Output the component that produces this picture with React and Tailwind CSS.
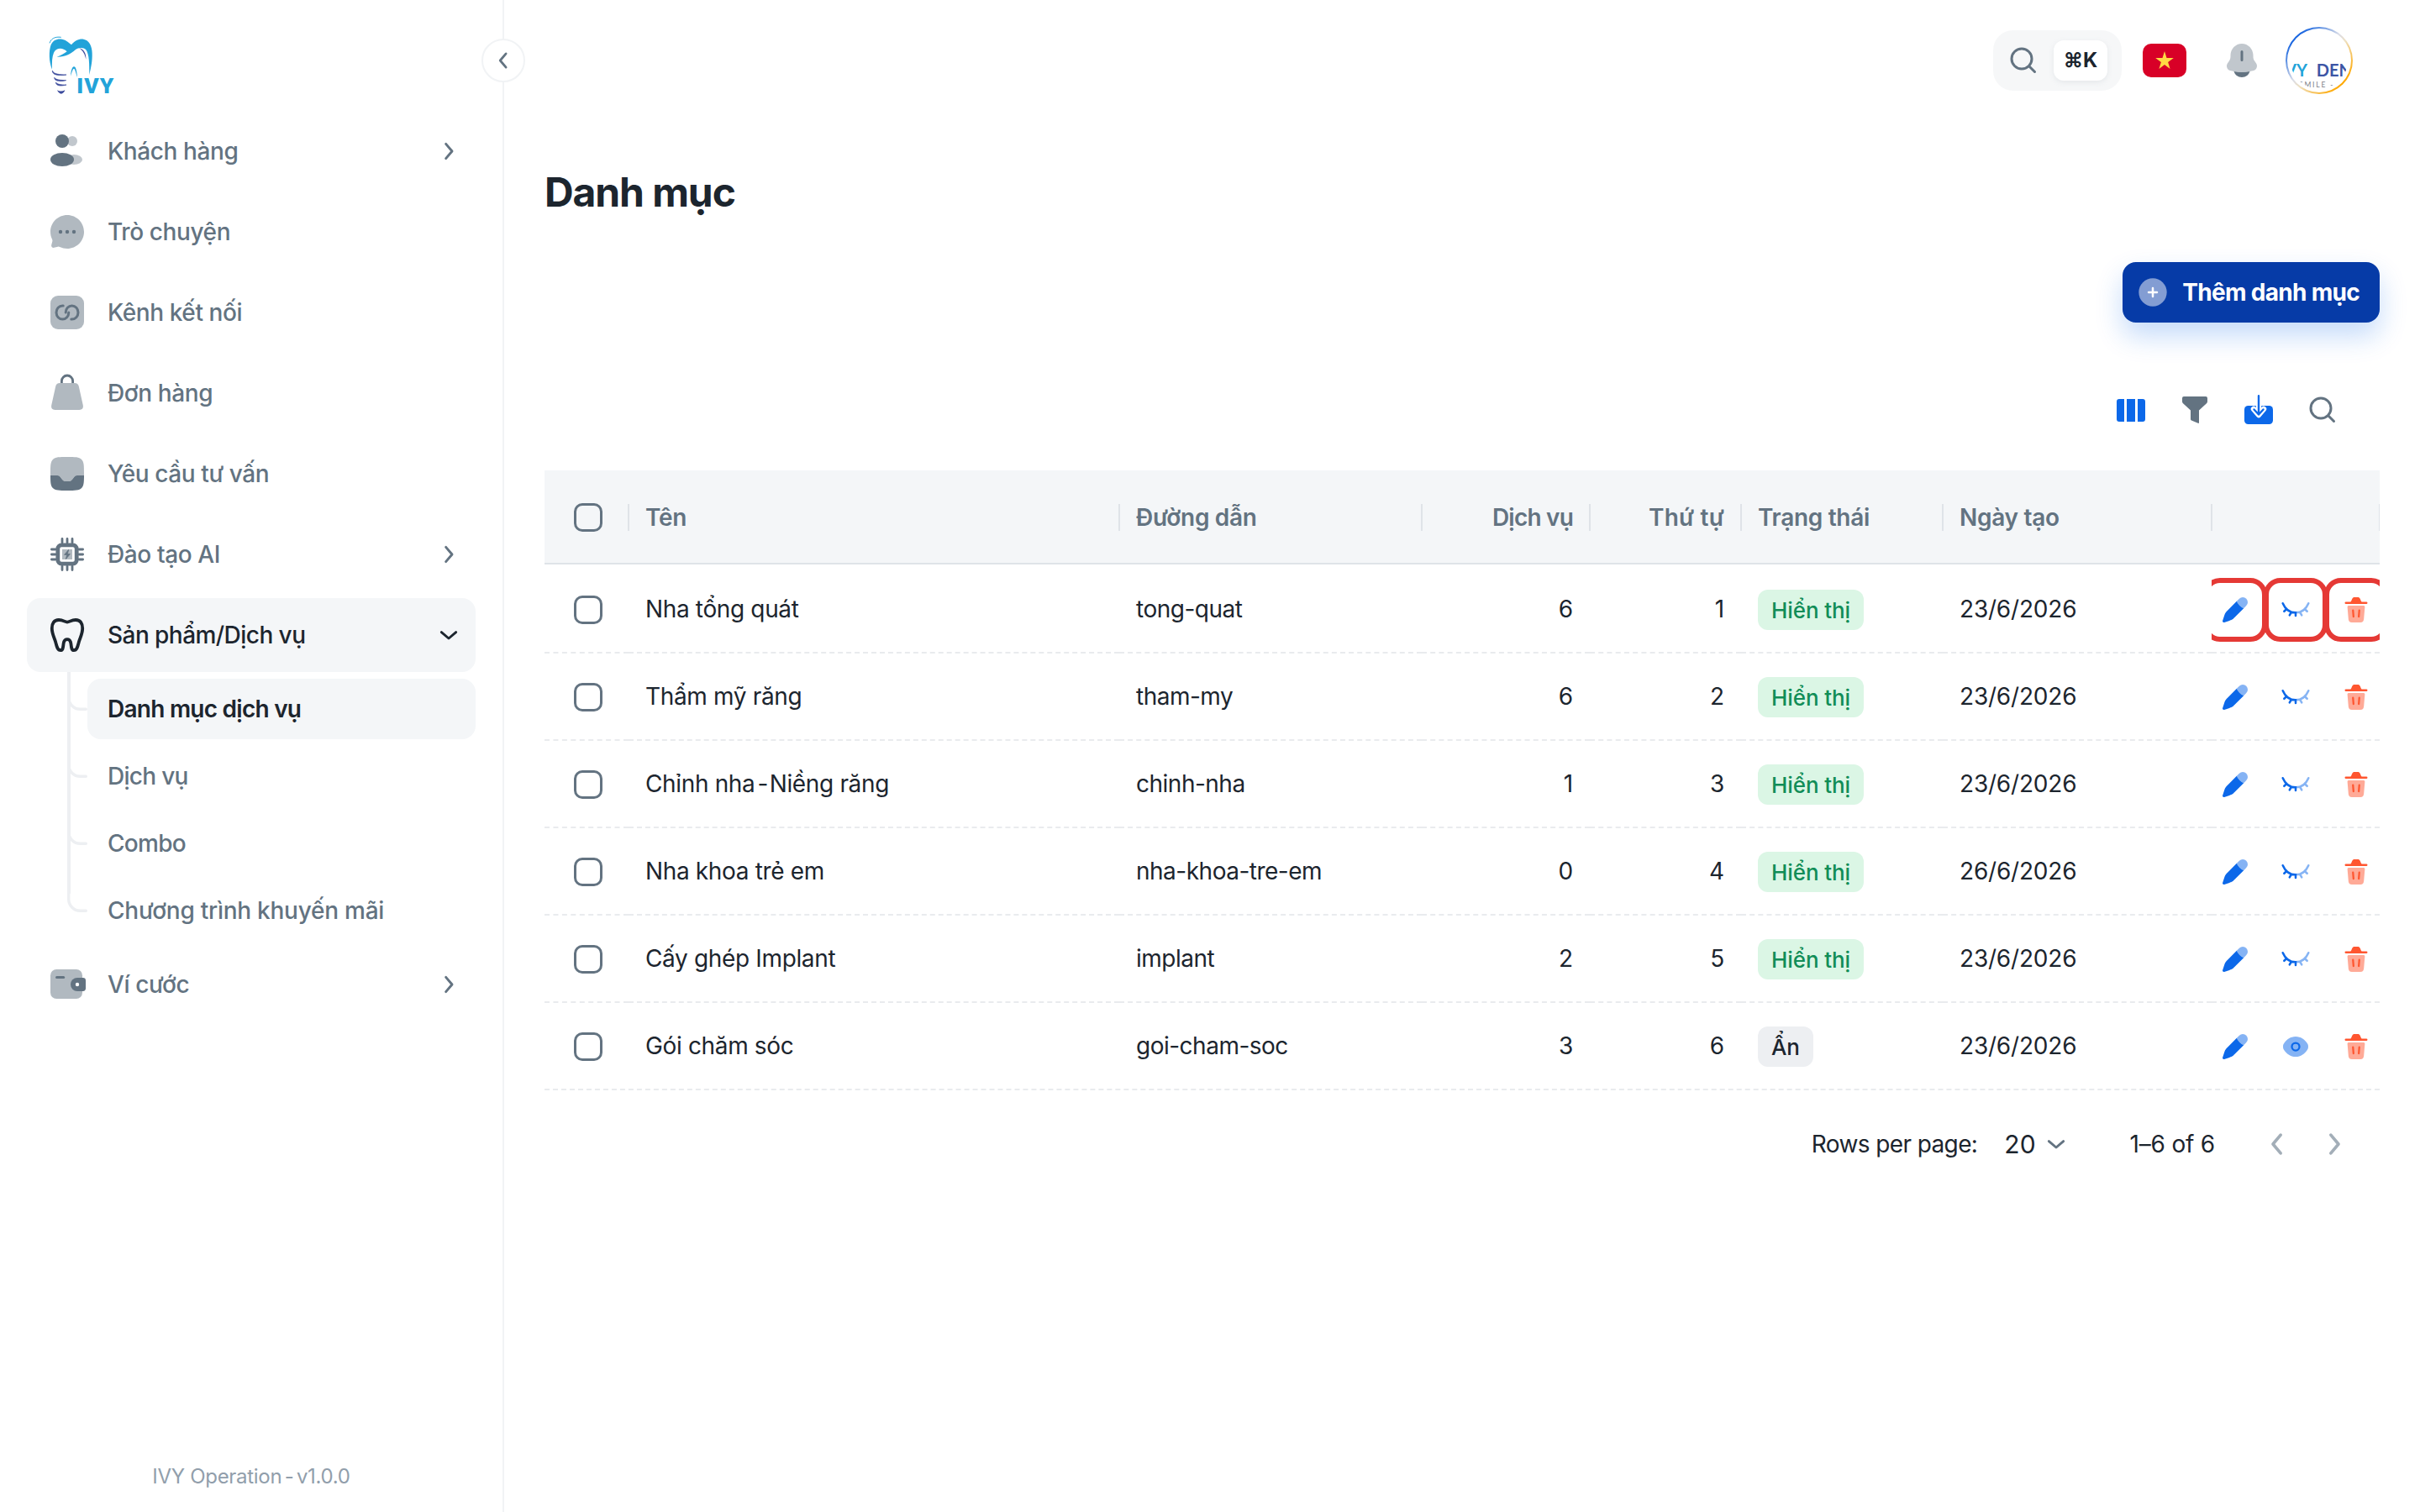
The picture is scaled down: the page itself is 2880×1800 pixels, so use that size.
import clsx from "clsx";

const NAV_ITEMS = [
  { label: "Khách hàng", icon: UsersIcon, arrow: true },
  { label: "Trò chuyện", icon: ChatIcon },
  { label: "Kênh kết nối", icon: LinkIcon },
  { label: "Đơn hàng", icon: BagIcon },
  { label: "Yêu cầu tư vấn", icon: InboxIcon },
  { label: "Đào tạo AI", icon: CpuIcon, arrow: true },
  {
    label: "Sản phẩm/Dịch vụ",
    icon: ToothIcon,
    arrow: true,
    active: true,
    children: ["Danh mục dịch vụ", "Dịch vụ", "Combo", "Chương trình khuyến mãi"],
  },
  { label: "Ví cước", icon: WalletIcon, arrow: true },
];

const ROWS = [
  { name: "Nha tổng quát", slug: "tong-quat", services: 6, order: 1, visible: true, date: "23/6/2026", highlight: true },
  { name: "Thẩm mỹ răng", slug: "tham-my", services: 6, order: 2, visible: true, date: "23/6/2026" },
  { name: "Chỉnh nha - Niềng răng", slug: "chinh-nha", services: 1, order: 3, visible: true, date: "23/6/2026" },
  { name: "Nha khoa trẻ em", slug: "nha-khoa-tre-em", services: 0, order: 4, visible: true, date: "26/6/2026" },
  { name: "Cấy ghép Implant", slug: "implant", services: 2, order: 5, visible: true, date: "23/6/2026" },
  { name: "Gói chăm sóc", slug: "goi-cham-soc", services: 3, order: 6, visible: false, date: "23/6/2026" },
];

const GRID = "grid grid-cols-[100px_584px_360px_200px_180px_240px_320px_200px]";

function Icon({ children, className = "size-12" }) {
  return (
    <svg viewBox="0 0 24 24" fill="currentColor" className={clsx("shrink-0", className)}>
      {children}
    </svg>
  );
}

function UsersIcon() {
  return (
    <Icon>
      <circle cx="15" cy="6" r="3" opacity="0.4" />
      <ellipse cx="16" cy="17" rx="5" ry="3" opacity="0.4" />
      <circle cx="9" cy="6" r="4" />
      <ellipse cx="9" cy="17" rx="7" ry="4" />
    </Icon>
  );
}

function ChatIcon() {
  return (
    <Icon>
      <path
        opacity="0.5"
        d="M12 22c5.523 0 10-4.477 10-10S17.523 2 12 2S2 6.477 2 12c0 1.6.376 3.112 1.043 4.453c.178.356.237.763.134 1.148l-.595 2.226a1.3 1.3 0 0 0 1.591 1.592l2.226-.596a1.63 1.63 0 0 1 1.149.133A9.96 9.96 0 0 0 12 22"
      />
      <circle cx="8" cy="12" r="1.1" />
      <circle cx="12" cy="12" r="1.1" />
      <circle cx="16" cy="12" r="1.1" />
    </Icon>
  );
}

function LinkIcon() {
  return (
    <Icon>
      <rect x="2" y="2" width="20" height="20" rx="4.5" opacity="0.5" />
      <g fill="none" stroke="currentColor" strokeWidth="1.5" strokeLinecap="round">
        <path d="M9.6 8H9.2a3.7 4 0 1 0 3.7 4" />
        <path d="M14.4 16h.4a3.7 4 0 1 0-3.7-4" />
      </g>
    </Icon>
  );
}

function BagIcon() {
  return (
    <Icon>
      <path
        opacity="0.5"
        d="M7.6 6h8.8c1.4 0 2.2.6 2.5 2l2.5 11.3c.3 1.7-.5 2.7-2.2 2.7H4.8c-1.7 0-2.5-1-2.2-2.7L5.1 8c.3-1.4 1.1-2 2.5-2z"
      />
      <path d="M8.7 6V4.8a3.3 3.3 0 0 1 6.6 0V6" fill="none" stroke="currentColor" strokeWidth="1.4" />
    </Icon>
  );
}

function InboxIcon() {
  return (
    <Icon>
      <path
        opacity="0.5"
        d="M12 2C7.286 2 4.929 2 3.465 3.464C2 4.93 2 7.286 2 12v1h3.16c.905 0 1.358 0 1.756.183s.692.527 1.281 1.214l.606.706c.589.687.883 1.031 1.281 1.214s.85.183 1.756.183h.32c.905 0 1.358 0 1.756-.183s.692-.527 1.281-1.214l.606-.706c.589-.687.883-1.031 1.281-1.214S17.934 13 18.84 13H22v-1c0-4.714 0-7.071-1.465-8.536C19.072 2 16.714 2 12 2"
      />
      <path d="M2 13h3.16c.905 0 1.358 0 1.756.183s.692.527 1.281 1.214l.606.706c.589.687.883 1.031 1.281 1.214s.85.183 1.756.183h.32c.905 0 1.358 0 1.756-.183s.692-.527 1.281-1.214l.606-.706c.589-.687.883-1.031 1.281-1.214S17.934 13 18.84 13H22c-.01 4.1-.1 6.2-1.465 7.535C19.072 22 16.714 22 12 22s-7.071 0-8.535-1.465C2.1 19.2 2.01 17.1 2 13" />
    </Icon>
  );
}

function CpuIcon() {
  return (
    <Icon>
      <g fill="none" stroke="currentColor" strokeLinecap="round">
        <rect x="6.4" y="6.4" width="11.2" height="11.2" rx="2.2" strokeWidth="2.4" />
        <path
          strokeWidth="1.4"
          d="M9 2.7V5M12 2.7V5M15 2.7V5M9 19v2.3M12 19v2.3M15 19v2.3M2.7 9H5M2.7 12H5M2.7 15H5M19 9h2.3M19 12h2.3M19 15h2.3"
        />
      </g>
      <rect x="9" y="9" width="6" height="6" opacity="0.5" />
      <path d="M12.8 9.2l-2.5 3h1.5l-.6 2.6 2.5-3h-1.5z" stroke="currentColor" strokeWidth="0.4" />
    </Icon>
  );
}

function ToothIcon() {
  return (
    <Icon>
      <path
        fill="none"
        stroke="currentColor"
        strokeWidth="1.9"
        strokeLinejoin="round"
        d="M12 4.3c-1.3 0-2.4-1.3-5-1.3C4.1 3 2.9 5.3 2.9 8c0 3.3 1.5 5.7 2.2 8.2.6 2.3 1 4.9 2.9 4.9 1.6 0 1.5-2 1.8-4 .2-1.5.7-2.5 2.2-2.5s2 1 2.2 2.5c.3 2 .2 4 1.8 4 1.9 0 2.3-2.6 2.9-4.9.7-2.5 2.2-4.9 2.2-8.2 0-2.7-1.2-5-4.1-5-2.6 0-3.7 1.3-5 1.3z"
      />
    </Icon>
  );
}

function WalletIcon() {
  return (
    <Icon>
      <rect x="2" y="3" width="19" height="17.5" rx="3.6" opacity="0.5" />
      <rect x="5" y="7" width="5.6" height="1.5" rx="0.75" />
      <path d="M18 8h3.4c1 0 1.6.6 1.6 1.6v4.8c0 1-.6 1.6-1.6 1.6H18a4 4 0 0 1 0-8" />
      <circle cx="18" cy="12" r="1.1" fill="#fff" />
    </Icon>
  );
}

function Chevron({ dir = "right", className = "size-8" }) {
  const d = {
    right: "M9.5 5.5L15 12l-5.5 6.5",
    left: "M14.5 5.5L9 12l5.5 6.5",
    down: "M5.5 9.5L12 15l6.5-5.5",
  }[dir];
  return (
    <svg viewBox="0 0 24 24" fill="none" stroke="currentColor" strokeWidth="2.2" strokeLinecap="round" strokeLinejoin="round" className={clsx("shrink-0", className)}>
      <path d={d} />
    </svg>
  );
}

function SearchIcon({ className }) {
  return (
    <svg viewBox="0 0 32 32" fill="none" stroke="currentColor" strokeWidth="3" strokeLinecap="round" className={className}>
      <circle cx="14" cy="14" r="12" />
      <path d="M23 23l6.5 6.5" />
    </svg>
  );
}

function Logo() {
  return (
    <svg viewBox="0 0 360 270" className="ml-10 mt-[30px] h-[90px] w-[120px]">
      <path
        fill="#22a3d9"
        d="M66 158C54 130 54 92 62 70C70 52 86 47 102 50C116 53 126 62 135 70C146 56 162 48 178 50C198 53 209 75 209 100C210 130 205 150 199 178C199 140 199 104 187 88C178 78 160 80 149 88C133 103 112 114 83 113C98 108 112 100 119 94C104 78 80 80 72 98C66 112 65 132 66 158z"
      />
      <path fill="none" stroke="#22a3d9" strokeWidth="3" d="M57 64C62 48 76 40 98 43" />
      <path fill="#22a3d9" d="M132 182C134 160 138 148 144 148C151 148 154 162 156 186C150 168 148 156 144 155C140 156 137 166 132 182z" />
      <path fill="#3b4a9c" d="M163 82C180 86 188 102 187 122C183 104 177 92 163 82z" />
      <g fill="#3b4a9c">
        <path d="M67 162C66 176 84 182 117 177C92 176 72 176 67 162z" stroke="#3b4a9c" strokeWidth="2" />
        <path d="M74 187C74 200 92 202 116 197C96 196 80 196 74 187z" stroke="#3b4a9c" strokeWidth="2" />
        <path d="M79 204C80 216 94 219 117 213C98 213 85 212 79 204z" stroke="#3b4a9c" strokeWidth="2" />
        <path d="M84 232C92 237 102 237 112 232C110 240 104 244 98 245C91 243 87 239 84 232z" />
      </g>
      <text x="154" y="243" fontSize="79" fontWeight="900" letterSpacing="3" fill="#22a3d9" fontFamily="Roboto, sans-serif">
        IVY
      </text>
    </svg>
  );
}

function NavItem({ item }) {
  const NavIcon = item.icon;
  return (
    <li>
      <a
        className={clsx(
          "flex h-[88px] items-center rounded-2xl pl-6 pr-4 font-medium",
          item.active ? "bg-[#f4f6f8] tracking-[-0.55px] text-[#1c252e]" : "tracking-[-0.4px] text-[#637381]"
        )}
      >
        <NavIcon />
        <span className="ml-6 flex-1">{item.label}</span>
        {item.arrow && <Chevron dir={item.active ? "down" : "right"} />}
      </a>
      {item.children && (
        <ul className="relative ml-12 flex flex-col gap-2 pl-6 pt-2">
          <li className="absolute left-0 top-0 h-[264px] w-1 bg-[#edeff2]" />
          {item.children.map((child, i) => (
            <li
              key={child}
              className={clsx(
                "relative flex h-[72px] items-center rounded-2xl pl-6",
                i === 0 ? "bg-[#f4f6f8] font-semibold tracking-[-0.75px] text-[#1c252e]" : "font-medium text-[#637381]",
                (i === 1 || i === 2) && "tracking-[-0.7px]",
                i === 3 && "tracking-[-0.25px]"
              )}
            >
              <svg viewBox="0 0 14 14" fill="none" stroke="#edeff2" strokeWidth="2" strokeLinecap="round" className="absolute -left-6 top-3.5 size-6">
                <path d="M1 1v4a8 8 0 0 0 8 8h4" />
              </svg>
              {child}
            </li>
          ))}
        </ul>
      )}
    </li>
  );
}

function Sidebar() {
  return (
    <aside className="relative flex w-[600px] shrink-0 flex-col border-r-2 border-[#f1f3f5]">
      <Logo />
      <ul className="mt-4 flex flex-col gap-2 pl-8 pr-8">
        {NAV_ITEMS.map((item) => (
          <NavItem key={item.label} item={item} />
        ))}
      </ul>
      <p className="mb-[26px] mt-auto text-center text-[24px] leading-8 tracking-[-0.3px] text-[#919eab]">
        IVY Operation<span className="-mx-[3px]"> - </span>v1.0.0
      </p>
      <button className="absolute -right-[27px] top-[46px] flex size-[52px] items-center justify-center rounded-full border-2 border-[#f1f3f5] bg-white text-[#637381]">
        <Chevron dir="left" className="size-[30px]" />
      </button>
    </aside>
  );
}

function Header() {
  return (
    <header className="flex h-36 items-center justify-end pr-20">
      <div className="flex h-[72px] w-[153px] items-center rounded-3xl bg-[#f6f7f8] pl-5">
        <SearchIcon className="size-8 text-[#637381]" />
        <kbd className="ml-5 flex h-12 w-16 items-center justify-center rounded-xl bg-white font-[Inter,sans-serif] text-[24px] font-bold text-[#1c252e] shadow-[0_2px_6px_rgba(145,158,171,0.16)]">
          ⌘K
        </kbd>
      </div>
      <svg viewBox="0 0 52 40" className="ml-[25px] h-10 w-[52px]">
        <rect width="52" height="40" rx="10" fill="#d80027" />
        <path fill="#ffda44" d="M26 9l2.5 8h8.3l-6.7 4.9 2.5 8L26 25l-6.6 4.9 2.5-8-6.7-4.9h8.3z" />
      </svg>
      <svg viewBox="0 0 24 24" fill="#637381" className="ml-[42px] size-12">
        <path
          opacity="0.4"
          d="M18.75 9v.704c0 .845.24 1.671.692 2.374l1.108 1.723c1.011 1.574.239 3.713-1.52 4.21a25.8 25.8 0 0 1-14.06 0c-1.759-.497-2.531-2.636-1.52-4.21l1.108-1.723a4.4 4.4 0 0 0 .693-2.374V9c0-3.866 3.022-7 6.749-7s6.75 3.134 6.75 7"
        />
        <path d="M12.75 6.8a.75.75 0 0 0-1.5 0v5a.75.75 0 0 0 1.5 0zM7.243 18.545a5.002 5.002 0 0 0 9.513 0c-3.145.59-6.367.59-9.513 0" />
      </svg>
      <div className="ml-7 size-20 rounded-full bg-[linear-gradient(135deg,#1463e0_15%,#d9dce8_45%,#eee0c0_55%,#ffa800_85%)] p-[2px]">
        <div className="size-full rounded-full bg-white p-1">
          <div className="flex size-full flex-col items-start overflow-hidden rounded-full pt-[33px] font-[Lato,sans-serif]">
            <p className="-ml-[7px] whitespace-nowrap text-[20px] font-bold leading-6 text-[#3c55a5]">
              <span className="text-[#22a3d9]">VY</span>
              <span className="ml-[11px]">DEN</span>
            </p>
            <p className="ml-[10px] whitespace-nowrap text-[8.5px] leading-3 tracking-[1.8px] text-[#7b8088]">SMILE -</p>
          </div>
        </div>
      </div>
    </header>
  );
}

function Toolbar() {
  return (
    <div className="mt-[66px] flex h-[76px] items-center justify-end pr-[30px]">
      <span className="flex w-[76px] justify-center">
        <svg viewBox="0 0 34 27" fill="#0c68e9" className="h-[27px] w-[34px]">
          <path d="M3 0h6v27H3a3 3 0 0 1-3-3V3a3 3 0 0 1 3-3M12 0h10v27H12zM25 0h6a3 3 0 0 1 3 3v21a3 3 0 0 1-3 3h-6z" />
        </svg>
      </span>
      <span className="flex w-[76px] justify-center">
        <svg viewBox="0 0 30 32" fill="#637381" className="h-8 w-[30px]">
          <path d="M2 0h26a2 2 0 0 1 2 2v4q0 1.2-.8 2L20 16.5V31q0 1.3-1.2.8L11 28.5q-1-.4-1-1.5V16.500L.8 8Q0 7.200 0 6V2a2 2 0 0 1 2-2" />
        </svg>
      </span>
      <span className="flex w-[76px] justify-center">
        <svg viewBox="0 0 34 35" fill="none" strokeLinecap="round" strokeLinejoin="round" className="-mt-0.5 h-[35px] w-[34px]">
          <rect y="13" width="34" height="22" rx="4.5" fill="#0c68e9" />
          <path d="M17 12v11M11 17l6 7 6-7" stroke="#fff" strokeWidth="6.5" />
          <path d="M17 1.2V23M11.5 17.500l5.500 6 5.500-6" stroke="#0c68e9" strokeWidth="2.4" />
        </svg>
      </span>
      <span className="flex w-[76px] justify-center">
        <SearchIcon className="size-8 text-[#637381]" />
      </span>
    </div>
  );
}

function Checkbox() {
  return <span className="ml-[35px] block size-[34px] rounded-[10px] border-[3px] border-[#637381]" />;
}

function HeadCell({ children, className }) {
  return (
    <div className={clsx("relative flex items-center px-5 pt-0.5", className)}>
      {children}
      <span className="absolute -right-px top-10 h-8 w-0.5 bg-[#dfe3e8]" />
    </div>
  );
}

function PenIcon() {
  return (
    <Icon className="size-9 text-[#0c68e9]">
      <path
        opacity="0.5"
        d="M20.848 8.713a3.932 3.932 0 0 0-5.561-5.561l-2.052 2.052a10.3 10.3 0 0 0 2.235 3.327a10.3 10.3 0 0 0 3.326 2.234z"
      />
      <path d="M11.4 18.161l7.396-7.396a10.3 10.3 0 0 1-3.326-2.234a10.3 10.3 0 0 1-2.235-3.327L5.839 12.6c-.577.577-.866.866-1.114 1.184a6.6 6.6 0 0 0-.749 1.211c-.173.364-.302.752-.56 1.526l-1.362 4.083a1.06 1.06 0 0 0 1.342 1.342l4.083-1.362c.775-.258 1.162-.387 1.526-.56q.647-.308 1.211-.749c.318-.248.607-.537 1.184-1.114" />
    </Icon>
  );
}

function EyeIcon() {
  return (
    <Icon className="size-9 text-[#0c68e9]">
      <path
        opacity="0.5"
        d="M2 12c0 1.64.425 2.191 1.275 3.296C4.972 17.5 7.818 20 12 20s7.028-2.5 8.725-4.704C21.575 14.192 22 13.639 22 12c0-1.64-.425-2.191-1.275-3.296C19.028 6.5 16.182 4 12 4S4.972 6.5 3.275 8.704C2.425 9.81 2 10.361 2 12"
      />
      <circle cx="12" cy="12" r="3" fill="none" stroke="currentColor" strokeWidth="1.5" />
    </Icon>
  );
}

function EyeClosedIcon() {
  return (
    <svg viewBox="0 0 24 24" fill="none" strokeWidth="1.7" strokeLinecap="round" className="size-9 shrink-0 overflow-visible">
      <path stroke="#86b4f4" d="M22.2 6.8c-2 4.7-5.7 7.4-10.2 7.400M15.500 14l1.300 2.200M19.300 11.500l1.800 1.700" />
      <path stroke="#0c68e9" d="M1.8 6.8c2 4.700 5.700 7.400 10.200 7.400v2.400M8.500 14l-1.300 2.200M4.700 11.500l-1.800 1.700" />
    </svg>
  );
}

function TrashIcon() {
  return (
    <Icon className="size-9 text-[#ff5630]">
      <path d="M3.9 5.6H7.6C8.2 5.2 8.400 4.200 8.900 3.200C9.300 2.300 9.800 2 10.600 2h2.800c.8 0 1.300.300 1.700 1.200c.5 1 .7 2 1.300 2.400h3.700a.9.9 0 0 1 0 1.800H3.900a.9.9 0 0 1 0-1.800" />
      <path
        opacity="0.5"
        d="M6.300 8.600h11.400c.9 0 1.300.5 1.200 1.400l-.8 9.300c-.2 1.900-.9 2.700-2.700 2.700H8.600c-1.800 0-2.500-.8-2.700-2.700L5.100 10c-.1-.9.300-1.400 1.200-1.400"
      />
      <path d="M9.500 12.400l.4 5M14.500 12.400l-.4 5" fill="none" stroke="currentColor" strokeWidth="1.5" strokeLinecap="round" />
    </Icon>
  );
}

function ActionButton({ highlight, children }) {
  return (
    <button
      className={clsx(
        "-mx-0.5 flex size-[76px] shrink-0 items-center justify-center rounded-[20px] border-[6px]",
        highlight ? "border-[#e53935]" : "border-transparent"
      )}
    >
      {children}
    </button>
  );
}

// keeps the dash between two names close to its neighbours
function CategoryName({ name }) {
  const [head, tail] = name.split(" - ");
  if (!tail) return name;
  return (
    <p>
      {head}
      <span className="-mx-[3px] tracking-[-1.8px]"> - </span>
      {tail}
    </p>
  );
}

function Row({ row, first }) {
  const cell = clsx(
    "flex h-[104px] items-center border-t-2 border-dashed px-5",
    first ? "border-transparent" : "border-[#e9ebee]"
  );
  return (
    <div className={clsx(GRID, "tracking-[-0.2px]")}>
      <div className={clsx(cell, "px-0! pt-0.5")}>
        <Checkbox />
      </div>
      <div className={clsx(cell, "tracking-[-0.35px]")}>
        <CategoryName name={row.name} />
      </div>
      <div className={clsx(cell, "tracking-[-0.5px]")}>{row.slug}</div>
      <div className={clsx(cell, "justify-end")}>{row.services}</div>
      <div className={clsx(cell, "justify-end")}>{row.order}</div>
      <div className={clsx(cell, "pt-0.5")}>
        <span
          className={clsx(
            "flex h-12 items-center rounded-xl px-4 pt-0.5 text-[26px] font-medium tracking-[-0.1px]",
            row.visible ? "bg-[#dbf6e5] text-[#118d57]" : "bg-[#edeff2] text-[#1c252e]"
          )}
        >
          {row.visible ? "Hiển thị" : "Ẩn"}
        </span>
      </div>
      <div className={cell}>{row.date}</div>
      <div className={clsx(cell, "overflow-hidden px-0! pt-0.5")}>
        <div className="-ml-2 flex">
          <ActionButton highlight={row.highlight}>
            <PenIcon />
          </ActionButton>
          <ActionButton highlight={row.highlight}>{row.visible ? <EyeClosedIcon /> : <EyeIcon />}</ActionButton>
          <ActionButton highlight={row.highlight}>
            <TrashIcon />
          </ActionButton>
        </div>
      </div>
    </div>
  );
}

function CategoryTable() {
  return (
    <section className="mt-[34px]">
      <div className={clsx(GRID, "h-28 border-b-2 border-[#dfe3e8] bg-[#f4f6f8] font-semibold tracking-[-0.3px] text-[#637381]")}>
        <HeadCell className="px-0!">
          <Checkbox />
        </HeadCell>
        <HeadCell>Tên</HeadCell>
        <HeadCell>Đường dẫn</HeadCell>
        <HeadCell className="justify-end tracking-[-0.8px]">Dịch vụ</HeadCell>
        <HeadCell className="justify-end tracking-[0.2px]">Thứ tự</HeadCell>
        <HeadCell>Trạng thái</HeadCell>
        <HeadCell>Ngày tạo</HeadCell>
        <HeadCell className="overflow-hidden" />
      </div>
      {ROWS.map((row, i) => (
        <Row key={row.slug} row={row} first={i === 0} />
      ))}
      <div className="border-t-2 border-dashed border-[#e9ebee]" />
    </section>
  );
}

function Pagination() {
  return (
    <div className="flex h-32 items-center justify-end pr-[34px]">
      <span className="tracking-[-0.6px]">Rows per page:</span>
      <span className="ml-8 text-[30px]">20</span>
      <Chevron dir="down" className="ml-2 size-8 text-[#637381]" />
      <span className="ml-[72px] tracking-[-0.2px]">1–6 of 6</span>
      <Chevron dir="left" className="ml-[54px] size-10 text-[#a3aeb8]" />
      <Chevron dir="right" className="ml-7 size-10 text-[#a3aeb8]" />
    </div>
  );
}

export default function App() {
  return (
    <div className="flex h-[1800px] w-[2880px] overflow-hidden bg-white font-[Inter,'Noto_Sans',sans-serif] text-[28px] leading-[44px] text-[#1c252e]">
      <Sidebar />
      <main className="flex-1 pl-12">
        <Header />
        <div className="w-[2184px]">
          <h1 className="mt-[49px] text-[48px] font-bold leading-[72px] tracking-[-1.1px]">Danh mục</h1>
          <div className="mt-[47px] flex justify-end">
            <button className="flex h-[72px] items-center rounded-2xl bg-[#063ba7] pl-4 pr-6 font-bold tracking-[-0.7px] text-white shadow-[0_16px_32px_rgba(12,104,233,0.24)]">
              <Icon className="size-10">
                <circle cx="12" cy="12" r="10" opacity="0.5" />
                <path d="M12 9v6M9 12h6" stroke="#fff" strokeWidth="1.5" strokeLinecap="round" />
              </Icon>
              <span className="ml-[15px]">Thêm danh mục</span>
            </button>
          </div>
          <Toolbar />
          <CategoryTable />
          <Pagination />
        </div>
      </main>
    </div>
  );
}
